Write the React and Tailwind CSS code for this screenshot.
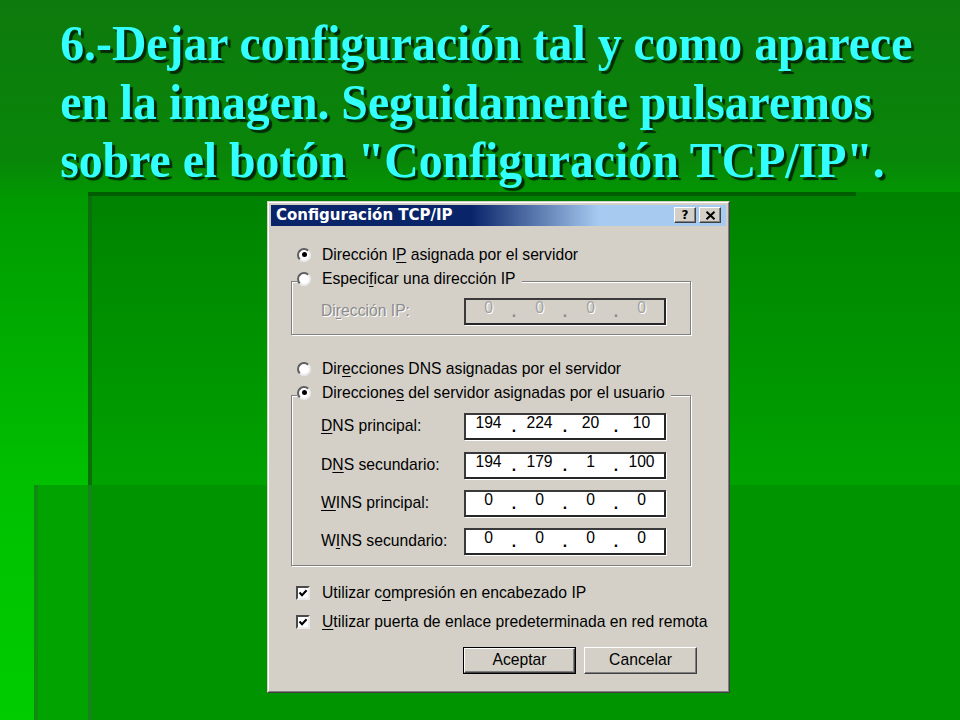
import React from "react";

const U = ({ children }) => (
  <span className="underline decoration-1 underline-offset-[2px]">{children}</span>
);

function Radio({ checked }) {
  return (
    <span className="flex h-[14px] w-[14px] shrink-0 items-center justify-center rounded-full border-2 border-t-[#5e5e5e] border-l-[#5e5e5e] border-r-[#ececec] border-b-[#ececec] bg-white">
      {checked ? <span className="h-[5px] w-[5px] rounded-full bg-black" /> : null}
    </span>
  );
}

function Check() {
  return (
    <span className="flex h-[14px] w-[14px] shrink-0 items-center justify-center border-2 border-t-[#4a4a4a] border-l-[#4a4a4a] border-r-[#ececec] border-b-[#ececec] bg-white">
      <svg width="10" height="10" viewBox="0 0 10 10">
        <path d="M1.5 4.6 L4 7.2 L8.6 2.2" fill="none" stroke="#000" strokeWidth="2.1" />
      </svg>
    </span>
  );
}

function Seg({ v, disabled }) {
  return (
    <span
      className={
        disabled
          ? "w-[45px] text-center text-[#a2a2a2] [text-shadow:1px_1px_0_#ffffff]"
          : "w-[45px] text-center text-black"
      }
    >
      {v}
    </span>
  );
}

function Dot({ disabled }) {
  return (
    <span
      className={
        disabled
          ? "w-[6px] translate-y-[4px] text-center font-bold text-[#8a8a8a]"
          : "w-[6px] translate-y-[4px] text-center font-bold text-black"
      }
    >
      .
    </span>
  );
}

function IpField({ values, disabled }) {
  return (
    <div
      className={
        disabled
          ? "flex h-[27px] w-[202px] shrink-0 border-2 border-t-[#3a3a3a] border-l-[#3a3a3a] border-r-[#262626] border-b-[#262626] bg-[#d4d0c8] leading-[16px] shadow-[1px_1px_0_#ffffff]"
          : "flex h-[27px] w-[202px] shrink-0 border-2 border-t-[#3a3a3a] border-l-[#3a3a3a] border-r-[#262626] border-b-[#262626] bg-white leading-[16px] shadow-[1px_1px_0_#ffffff]"
      }
    >
      <Seg v={values[0]} disabled={disabled} />
      <Dot disabled={disabled} />
      <Seg v={values[1]} disabled={disabled} />
      <Dot disabled={disabled} />
      <Seg v={values[2]} disabled={disabled} />
      <Dot disabled={disabled} />
      <Seg v={values[3]} disabled={disabled} />
    </div>
  );
}

function FieldRow({ label, values, disabled, className }) {
  return (
    <div className={"flex h-[27px] items-center pl-[29px] " + className}>
      <span
        className={
          disabled
            ? "w-[143px] shrink-0 whitespace-nowrap text-[#8c8c8c] [text-shadow:1px_1px_0_#ffffff]"
            : "w-[143px] shrink-0 whitespace-nowrap"
        }
      >
        {label}
      </span>
      <IpField values={values} disabled={disabled} />
    </div>
  );
}

function TitleButton({ children }) {
  return (
    <div className="flex h-[16px] w-[22px] items-center justify-center border border-t-white border-l-white border-r-[#404040] border-b-[#404040] bg-[#d4d0c8] shadow-[inset_-1px_-1px_0_#808080]">
      {children}
    </div>
  );
}

function Dialog() {
  return (
    <div className="ml-[267px] mt-[11px] h-[492px] w-[463px] border border-t-[#d4d0c8] border-l-[#d4d0c8] border-r-[#404040] border-b-[#404040] bg-[#d4d0c8] font-['Liberation_Sans',Arial,sans-serif] text-[15.7px] text-black">
      <div className="h-full border border-t-white border-l-white border-r-[#808080] border-b-[#808080] p-[2px]">
        {/* title bar */}
        <div className="flex h-[21px] items-center justify-between bg-[linear-gradient(to_right,#0a246a_0%,#0a246a_44%,#a6caf0_72%,#a6caf0_100%)] pl-[5px] pr-[5px]">
          <span className="whitespace-nowrap font-['DejaVu_Sans',sans-serif] text-[15px] font-bold leading-none text-white">
            Configuración TCP/IP
          </span>
          <div className="flex gap-[3px]">
            <TitleButton>
              <span className="font-['DejaVu_Sans',sans-serif] text-[12px] font-bold leading-none text-black">?</span>
            </TitleButton>
            <TitleButton>
              <svg width="11" height="9" viewBox="0 0 11 9">
                <path d="M1.5 0.8 L9.5 8.2 M9.5 0.8 L1.5 8.2" stroke="#000" strokeWidth="2" fill="none" />
              </svg>
            </TitleButton>
          </div>
        </div>

        {/* body */}
        <div className="flex flex-col">
          <div className="ml-[26px] mt-[20px] flex h-[18px] items-center gap-[11px]">
            <Radio checked />
            <span className="whitespace-nowrap leading-[18px]">
              Dirección I<U>P</U> asignada por el servidor
            </span>
          </div>

          <div className="ml-[20px] mt-[17px] w-[400px] border border-[#808080] pb-[9px] shadow-[inset_1px_1px_0_#ffffff,1px_1px_0_#ffffff]">
            <div className="-mt-[12px] ml-[5px] flex h-[18px] w-fit items-center gap-[11px] bg-[#d4d0c8] pr-[6px]">
              <Radio />
              <span className="whitespace-nowrap leading-[18px]">
                Especi<U>f</U>icar una dirección IP
              </span>
            </div>
            <FieldRow
              className="mt-[10px]"
              disabled
              label={
                <>
                  Di<U>r</U>ección IP:
                </>
              }
              values={["0", "0", "0", "0"]}
            />
          </div>

          <div className="ml-[26px] mt-[25px] flex h-[18px] items-center gap-[11px]">
            <Radio />
            <span className="whitespace-nowrap leading-[18px]">
              Dir<U>e</U>cciones DNS asignadas por el servidor
            </span>
          </div>

          <div className="ml-[20px] mt-[17px] w-[400px] border border-[#808080] pb-[10px] shadow-[inset_1px_1px_0_#ffffff,1px_1px_0_#ffffff]">
            <div className="-mt-[12px] ml-[5px] flex h-[18px] w-fit items-center gap-[11px] bg-[#d4d0c8] pr-[6px]">
              <Radio checked />
              <span className="whitespace-nowrap leading-[18px]">
                Direccione<U>s</U> del servidor asignadas por el usuario
              </span>
            </div>
            <FieldRow
              className="mt-[11px]"
              label={
                <>
                  <U>D</U>NS principal:
                </>
              }
              values={["194", "224", "20", "10"]}
            />
            <FieldRow
              className="mt-[12px]"
              label={
                <>
                  D<U>N</U>S secundario:
                </>
              }
              values={["194", "179", "1", "100"]}
            />
            <FieldRow
              className="mt-[11px]"
              label={
                <>
                  <U>W</U>INS principal:
                </>
              }
              values={["0", "0", "0", "0"]}
            />
            <FieldRow
              className="mt-[11px]"
              label={
                <>
                  W<U>I</U>NS secundario:
                </>
              }
              values={["0", "0", "0", "0"]}
            />
          </div>

          <div className="ml-[25px] mt-[18px] flex h-[18px] items-center gap-[12px]">
            <Check />
            <span className="whitespace-nowrap leading-[18px]">
              Utilizar c<U>o</U>mpresión en encabezado IP
            </span>
          </div>
          <div className="ml-[25px] mt-[11px] flex h-[18px] items-center gap-[12px]">
            <Check />
            <span className="whitespace-nowrap leading-[18px]">
              <U>U</U>tilizar puerta de enlace predeterminada en red remota
            </span>
          </div>

          <div className="ml-[192px] mt-[16px] flex gap-[8px]">
            <div className="flex h-[27px] w-[113px] border border-black">
              <div className="flex flex-1 items-center justify-center border border-t-white border-l-white border-r-[#404040] border-b-[#404040] shadow-[inset_-1px_-1px_0_#808080]">
                Aceptar
              </div>
            </div>
            <div className="flex h-[27px] w-[113px] items-center justify-center border border-t-white border-l-white border-r-[#404040] border-b-[#404040] shadow-[inset_-1px_-1px_0_#808080]">
              Cancelar
            </div>
          </div>
        </div>
      </div>
    </div>
  );
}

export default function App() {
  return (
    <div className="relative h-[720px] w-[960px] overflow-hidden bg-[linear-gradient(to_bottom,#0d7a0d_0px,#098609_160px,#009a00_200px,#00c000_485px,#00cc00_720px)]">
      {/* slide background shapes */}
      <div className="absolute left-[88px] right-0 top-[192px] h-[293px] border-l-4 border-[#0b6e0b] bg-[linear-gradient(to_bottom,#008200,#00a200)]" />
      <div className="absolute left-[88px] top-[192px] h-[4px] w-[768px] bg-[#005e00]" />
      <div className="absolute bottom-0 left-[34px] right-0 top-[485px] border-l-4 border-[#118a11] bg-[linear-gradient(to_right,#00a300_50px,#009500_50px)]" />
      <div className="absolute bottom-0 left-[88px] top-[485px] w-[4px] bg-[#168416]" />

      <div className="relative">
        <h1 className="origin-left scale-x-[0.955] pl-[63px] pt-[14px] font-['Liberation_Serif','Times_New_Roman',serif] text-[50px] font-bold leading-[58.5px] text-[#33ffff] [text-shadow:3px_3px_1px_#062806]">
          <span className="block whitespace-nowrap">6.-Dejar configuración tal y como aparece</span>
          <span className="block whitespace-nowrap">en la imagen. Seguidamente pulsaremos</span>
          <span className="block whitespace-nowrap">{'sobre el botón "Configuración TCP/IP".'}</span>
        </h1>
        <Dialog />
      </div>
    </div>
  );
}
